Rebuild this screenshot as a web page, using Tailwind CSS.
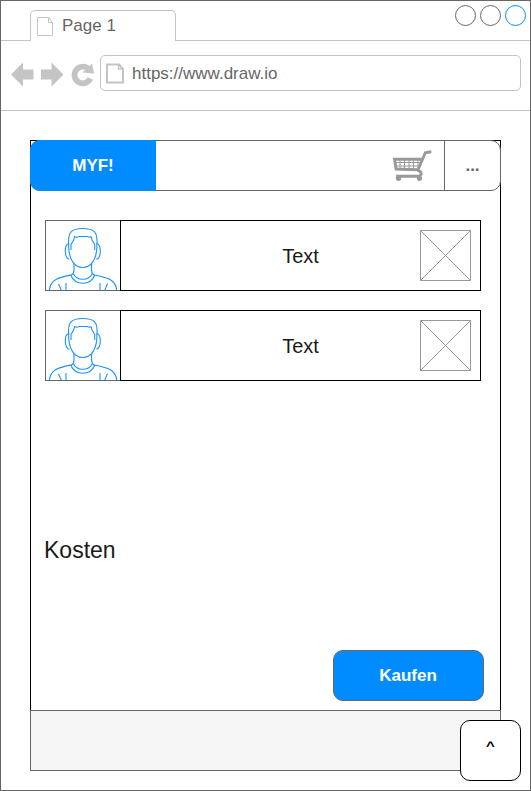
<!DOCTYPE html>
<html lang="de">
<head>
<meta charset="utf-8">
<title>Page 1</title>
<script src="https://cdn.jsdelivr.net/npm/@tailwindcss/browser@4"></script>
</head>
<body class="bg-white font-['Liberation_Sans',Arial,sans-serif]">
<svg class="hidden">
  <symbol id="person" viewBox="0 0 76 71">
    <g fill="none" stroke="#1e92fb" stroke-width="1.100">
      <path d="M24.3 39.3C21 38.5 20.4 35 20.3 31S21 24.5 23.6 23.5C23 12.500 26 8.500 37.800 8.500S52.600 12.500 52 23.500C54.600 24.500 55.300 27 55.300 31S54.600 38.500 51.300 39.300"/>
      <path d="M23.700 23C23 40 30 47.500 37.800 47.500S52.600 40 51.900 23"/>
      <path d="M26 30V24.500L28.700 20L29.500 16.700L32 17.200L34 16.500H42L44 17.200L46 16.700L47 20L49.700 24.500V30"/>
      <path d="M29 43.500V50.500Q29 53.500 26 55.500C28 60.500 32 63.200 37.800 63.200S47.600 60.500 49.600 55.500Q46.600 53.500 46.600 50.500V43.500"/>
      <path d="M28.300 53.500C30 57.500 33.500 59.300 37.800 59.300S45.600 57.500 47.300 53.500"/>
      <path d="M26.300 55C14 57.500 5.500 59 4.300 70.500M49.300 55C61.600 57.500 70.600 59 71.800 70.500M13.500 64L16.500 70.500M21 63V70.500M62.500 63.500L59.700 70.500M55 63V70.500"/>
    </g>
  </symbol>
</svg>
<div class="flex h-[791px] w-[531px] flex-col border border-[#666]">
  <header class="flex h-10 shrink-0">
    <div class="w-[29px] border-b border-[#c4c4c4]"></div>
    <div class="mt-[9px] flex w-[146px] rounded-t-[5px] border-x border-t border-[#c4c4c4] pl-1.5">
      <svg class="mt-1.5" width="17" height="20" fill="none" stroke="#c4c4c4"><path d="M.5.500H11.500L15.500 5.500V18.500H.5ZM11.500.500V5.500H15.500"/></svg>
      <span class="ml-2 mt-[3px] text-[17px] leading-6 text-[#666]">Page 1</span>
    </div>
    <div class="flex flex-1 justify-end gap-1 border-b border-[#c4c4c4] pr-1 pt-1">
      <div class="size-[21px] rounded-full border border-[#666]"></div>
      <div class="size-[21px] rounded-full border border-[#666]"></div>
      <div class="size-[21px] rounded-full border border-[#008cff]"></div>
    </div>
  </header>
  <nav class="flex h-[70px] shrink-0 border-b border-[#c4c4c4] pl-2.5 pt-3.5">
    <svg class="mt-1.5" width="89" height="28" fill="#c4c4c4">
      <path d="M0 13.500L12 1.500V8.500H22.500V18.500H12V25.500ZM52.500 13.500L40.500 1.500V8.500H30V18.500H40.500V25.500Z"/>
      <path d="M79.300 17.500A8.300 8.300 0 1 1 77 7.500" fill="none" stroke="#c4c4c4" stroke-width="5.800"/><path d="M81 2.500L83 12.500L71.500 11.500Z"/>
    </svg>
    <div class="flex h-9 w-[421px] rounded-[5px] border border-[#c4c4c4] pl-[5px]">
      <svg class="mt-[7px]" width="19" height="22" fill="none" stroke="#c4c4c4" stroke-width="2"><path d="M1 1.500H13L17 6V19.500H1Z"/><path d="M12.500 1.500V6H17" stroke-width="1.300"/></svg>
      <span class="ml-[7px] mt-1.5 text-[17px] leading-6 text-[#666]">https://www.draw.io</span>
    </div>
  </nav>
  <main class="relative ml-[29px] mt-[29px] flex h-[631px] w-[471px] shrink-0 flex-col">
    <section class="flex h-[570px] flex-col border-x border-t border-black">
      <div class="-mx-px -mt-px flex h-[51px] shrink-0 rounded-[10px] border border-[#666] bg-white">
        <div class="-my-px -ml-px flex w-[126px] items-center justify-center rounded-l-[10px] bg-[#008cff] text-[17px] font-bold text-white">MYF!</div>
        <div class="flex flex-1 justify-end border-r border-[#666] pr-3">
          <svg class="mt-[9px]" width="40" height="33" fill="none" stroke="#999">
            <path d="M39.300 1.800L33.300 2.800L26 19.800L4 19L2.600 9.300H29.500" stroke-width="2.900"/>
            <path d="M8 9V19M12.500 9V20M17 9V20M21.500 9V20M26 9V18M3 12.500H29M4 16H27" stroke-width="1"/>
            <path d="M25.500 20.300Q30 21.500 29 24.300Q28 26.300 25 26.300H4" stroke-width="3"/>
            <circle cx="6.500" cy="28.300" r="2.600" fill="#999" stroke="none"/><circle cx="27.500" cy="28.300" r="2.600" fill="#999" stroke="none"/>
          </svg>
        </div>
        <div class="flex w-[55px] items-center justify-center text-[17px] font-bold text-[#666]">...</div>
      </div>
      <div class="ml-3.5 mt-[29px] flex w-[436px] flex-col gap-[19px]">
        <div class="flex h-[71px]">
          <div class="w-[75px] border-y border-l border-[#666]"><svg class="-ml-px -mt-px" width="76" height="71"><use href="#person"/></svg></div>
          <div class="grid flex-1 grid-cols-[1fr_51px] items-center border border-black bg-white pr-[9px]">
            <span class="pl-[60px] text-center text-[20px] text-[#1a1a1a]">Text</span>
            <svg width="51" height="51" fill="none" stroke="#999"><path d="M.5.500H50.500V50.500H.5ZM.5.500L50.500 50.500M50.500.500L.5 50.500"/></svg>
          </div>
        </div>
        <div class="flex h-[71px]">
          <div class="w-[75px] border-y border-l border-[#666]"><svg class="-ml-px -mt-px" width="76" height="71"><use href="#person"/></svg></div>
          <div class="grid flex-1 grid-cols-[1fr_51px] items-center border border-black bg-white pr-[9px]">
            <span class="pl-[60px] text-center text-[20px] text-[#1a1a1a]">Text</span>
            <svg width="51" height="51" fill="none" stroke="#999"><path d="M.5.500H50.500V50.500H.5ZM.5.500L50.500 50.500M50.500.500L.5 50.500"/></svg>
          </div>
        </div>
      </div>
      <div class="ml-[13px] mt-[154px] text-[23px] leading-[30px] text-[#1a1a1a]">Kosten</div>
      <button class="mb-[9px] mr-4 mt-auto h-[51px] w-[151px] shrink-0 self-end rounded-[10px] border border-[#666] bg-[#008cff] pr-px text-[17px] font-bold text-white">Kaufen</button>
    </section>
    <footer class="h-[61px] shrink-0 border border-[#666] bg-[#f5f5f5]"></footer>
    <button class="absolute -bottom-2.5 -right-5 flex size-[61px] justify-center rounded-[10px] border border-black bg-white pt-[13px] text-[15px] font-bold leading-6 text-black"><span class="block h-6 scale-y-85">^</span></button>
  </main>
</div>
</body>
</html>
